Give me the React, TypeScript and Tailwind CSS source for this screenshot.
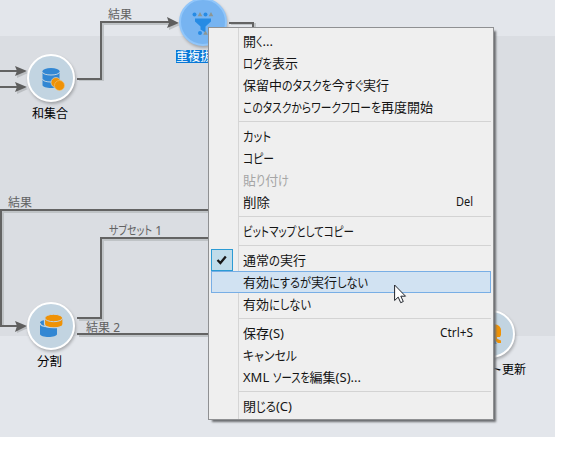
import { useLayoutEffect, useRef } from "react";
import type { ReactNode } from "react";

const jp = "font-['Noto_Sans','Noto_Sans_CJK_JP',sans-serif] [font-feature-settings:'palt']";

/** One line of text; kanji keep their shape and kana runs are condensed so the line fills `width`. */
function Fit({ text, width, className = "" }: { text: string; width: number; className?: string }) {
  const ref = useRef<HTMLSpanElement>(null);
  const runs = text.match(/[\u3040-\u30ff]+|[^\u3040-\u30ff]+/g) ?? [];
  useLayoutEffect(() => {
    const el = ref.current;
    if (!el) return;
    const spans = Array.from(el.children) as HTMLElement[];
    spans.forEach((s) => {
      s.style.width = "auto";
      s.style.transform = "none";
    });
    const widths = spans.map((s) => s.getBoundingClientRect().width);
    const kana = spans.map((s) => s.dataset.kana === "1");
    const hasKana = kana.includes(true);
    const flexible = widths.reduce((n, w, i) => n + (kana[i] || !hasKana ? w : 0), 0);
    const fixed = widths.reduce((n, w) => n + w, 0) - flexible;
    const k = (width - fixed) / flexible;
    spans.forEach((s, i) => {
      if (kana[i] || !hasKana) {
        s.style.width = `${widths[i] * k}px`;
        s.style.transform = `scaleX(${k})`;
      }
    });
  }, [text, width]);
  return (
    <span ref={ref} className={`inline-flex whitespace-pre ${jp} ${className}`}>
      {runs.map((r, i) => (
        <span key={i} data-kana={/[\u3040-\u30ff]/.test(r) ? "1" : "0"} className="block origin-left">
          {r}
        </span>
      ))}
    </span>
  );
}

type Entry = { text: string; w: number; key?: string; kw?: number; disabled?: boolean; checked?: boolean; active?: boolean };

const groups: Entry[][] = [
  [
    { text: "開く...", w: 30 },
    { text: "ログを表示", w: 55 },
    { text: "保留中のタスクを今すぐ実行", w: 146 },
    { text: "このタスクからワークフローを再度開始", w: 190 },
  ],
  [
    { text: "カット", w: 28 },
    { text: "コピー", w: 31 },
    { text: "貼り付け", w: 46, disabled: true },
    { text: "削除", w: 27, key: "Del", kw: 17 },
  ],
  [{ text: "ビットマップとしてコピー", w: 111 }],
  [
    { text: "通常の実行", w: 63, checked: true },
    { text: "有効にするが実行しない", w: 125, active: true },
    { text: "有効にしない", w: 68 },
  ],
  [
    { text: "保存(S)", w: 41, key: "Ctrl+S", kw: 33 },
    { text: "キャンセル", w: 54 },
    { text: "XML ソースを編集(S)...", w: 118 },
  ],
  [{ text: "閉じる(C)", w: 49 }],
];

function MenuItem({ e }: { e: Entry }) {
  return (
    <div
      className={`flex h-[22px] items-center pr-[18px] text-[13px] leading-5 ${
        e.active ? "bg-[#d1e2f2] outline outline-1 -outline-offset-1 outline-[#78aee5]" : ""
      } ${e.disabled ? "text-[#a5a5a5]" : "text-[#141414]"}`}
    >
      <span
        className={`mr-2.5 flex h-[22px] w-[22px] shrink-0 items-center justify-center ${
          e.checked ? "border border-[#2c9bd4] bg-[#c0dcea]" : ""
        }`}
      >
        {e.checked && (
          <svg width="12" height="11" viewBox="0 0 12 11">
            <path d="M1.500 5 4.400 8 9.800 1.600" fill="none" stroke="#181818" strokeWidth="2.3" />
          </svg>
        )}
      </span>
      <Fit text={e.text} width={e.w} className="pb-px" />
      {e.key && <Fit text={e.key} width={e.kw ?? 20} className="ml-auto text-xs" />}
    </div>
  );
}

function Menu() {
  return (
    <div className="absolute left-[208px] top-[27px] h-[393px] w-[286px] border border-[#8f9092] bg-[linear-gradient(90deg,#efefef_29px,#d5d5d5_29px,#d5d5d5_30px,#efefef_30px)] p-[2px] shadow-[3px_3px_2px_-1px_#6b6d70]">
      {groups.map((g, i) => (
        <div key={i}>
          {i > 0 && (
            <div className="flex h-[7px] items-center pl-[28px]">
              <div className="h-px w-full bg-[#d3d3d3]" />
            </div>
          )}
          {g.map((e) => (
            <MenuItem key={e.text} e={e} />
          ))}
        </div>
      ))}
    </div>
  );
}

/** Activity of the diagram: round icon with its caption below. */
function Node({ pos, caption, width, selected, children }: { pos: string; caption: string; width: number; selected?: boolean; children: ReactNode }) {
  return (
    <div className={`absolute flex w-[96px] flex-col items-center ${pos}`}>
      <div
        className={`flex h-[48px] w-[48px] items-center justify-center rounded-full border-2 shadow-[1px_2px_3px_#00000040] ${
          selected ? "border-[#91c6fa] bg-[#77b4f1]" : "border-white bg-[#c2d4e1]"
        }`}
      >
        {children}
      </div>
      <div
        className={`flex h-[13px] items-center text-xs ${
          selected ? "mt-1 bg-[#0878d7] text-white" : "mr-[3px] mt-[5px] text-black"
        }`}
      >
        <Fit text={caption} width={width} />
      </div>
    </div>
  );
}

function WireLabel({ pos, text, width }: { pos: string; text: string; width: number }) {
  return (
    <div className={`absolute text-xs leading-5 text-[#626262] ${pos}`}>
      <Fit text={text} width={width} />
    </div>
  );
}

function Wires() {
  return (
    <svg className="absolute inset-0" width="555" height="437" viewBox="0 0 555 437">
      <g fill="none" stroke="#bfc3c6" strokeWidth="2">
        <path d="M79 80H103V24H170M231 24H255V40M3 326V212H210M79 320H103V240H210M79 336H210" />
      </g>
      <g fill="none" stroke="#636363" strokeWidth="2">
        <path d="M0 71H18M0 87H18M77 79H101V22H170M229 23H253V40M18 326H1V210H210M77 318H101V238H210M77 334H210" />
      </g>
      <g fill="#9b9fa2" opacity=".5">
        <path d="M17 68l11 5-11 5zM17 84l11 5-11 5zM169 20l11 5-11 5zM17 323l11 5-11 5z" />
      </g>
      <g fill="#5e5e5e">
        <path d="M15 66l12 5-12 5 2-5zM15 82l12 5-12 5 2-5zM167 17l12 6-12 5 2-5zM15 321l12 5-12 6 2-6z" />
      </g>
    </svg>
  );
}

export default function App() {
  return (
    <div className="h-[452px] w-[569px] overflow-hidden bg-white">
      <div className="relative flex h-[437px] w-[555px] flex-col bg-[#e3e6eb] pt-9">
        <div className="h-[300px] bg-[#dadde2]" />
        <Wires />

        <Node pos="left-[3px] top-[54px]" caption="和集合" width={36}>
          <svg className="overflow-visible" width="24" height="24" viewBox="0 0 24 24">
            <path d="M3.5 5v14c0 4 17 4 17 0V5" fill="#3287d3" />
            <path d="M3.5 6c0 4 17 4 17 0M3.5 13c0 4 17 4 17 0" fill="none" stroke="#c2d4e1" strokeWidth="1" />
            <ellipse cx="12" cy="5" rx="8.5" ry="3" fill="#3287d3" />
            <circle cx="17" cy="16.5" r="5" fill="#ef9206" stroke="#c2d4e1" strokeWidth=".7" />
            <circle cx="20.5" cy="19.5" r="5" fill="#ef9206" stroke="#efc27c" strokeWidth=".6" />
          </svg>
        </Node>
        <Node pos="left-[155px] top-[-2px]" caption="重複抜き" width={54} selected>
          <svg className="overflow-visible" width="24" height="26" viewBox="0 0 24 26">
            <path d="M4 9.5h16v3l-5.5 5v6l-5-3v-3l-5.5-5z" fill="#278be4" />
            <g fill="#278be4">
              <circle cx="3.5" cy="5.5" r="2" />
              <circle cx="14.5" cy="5.5" r="2" />
              <circle cx="9" cy="24" r="2" />
            </g>
            <path d="M9 3l2.3 4.3H6.7zM20 3l2.3 4.3h-4.6zM14.5 21.5l2.3 4.3h-4.6z" fill="#8d9692" />
          </svg>
        </Node>
        <Node pos="left-[3px] top-[302px]" caption="分割" width={25}>
          <svg width="24" height="24" viewBox="0 0 24 24">
            <path d="M1 9v11c0 4 17 4 17 0V9z" fill="#3287d3" />
            <path d="M1 9c0-2 3-3 6-3v6c-4 0-6-1-6-3" fill="#3287d3" />
            <path d="M1 9c0 5 17 5 17 2" fill="none" stroke="#c2d4e1" strokeWidth="1.2" />
            <path d="M5.5 4v6c0 5 18.5 5 18.5 0V4z" fill="#ef9206" stroke="#c2d4e1" strokeWidth="1.2" />
            <ellipse cx="14.7" cy="4" rx="8.9" ry="3.7" fill="#ef9206" stroke="#c2d4e1" strokeWidth="1" />
          </svg>
        </Node>
        <Node pos="left-[443px] top-[310px]" caption="リスト更新" width={73}>
          <svg className="overflow-visible" width="24" height="24" viewBox="0 0 24 24">
            <path d="M5 8c0-8 17-8 17 0v5l-1 2h-3c-.5 2 .5 2 4 3.500v2.500h-3l-5-4-9-2z" fill="#ef9206" />
            <path d="M12 16c4 1 5 3 5.500 6H8z" fill="#3287d3" />
          </svg>
        </Node>

        <WireLabel pos="left-[108px] top-[5px]" text="結果" width={24} />
        <WireLabel pos="left-[8px] top-[193px]" text="結果" width={24} />
        <WireLabel pos="left-[109px] top-[221px]" text="サブセット 1" width={53} />
        <WireLabel pos="left-[86px] top-[318px]" text="結果 2" width={34} />

        <Menu />

        <svg className="absolute left-[394px] top-[284px]" width="13" height="20" viewBox="0 0 13 20">
          <path d="M.6 1v15.500l3.600-3.400 2.500 5.600 2.600-1.200-2.500-5.300h4.700z" fill="white" stroke="#20242c" strokeWidth="1" />
        </svg>
      </div>
    </div>
  );
}
